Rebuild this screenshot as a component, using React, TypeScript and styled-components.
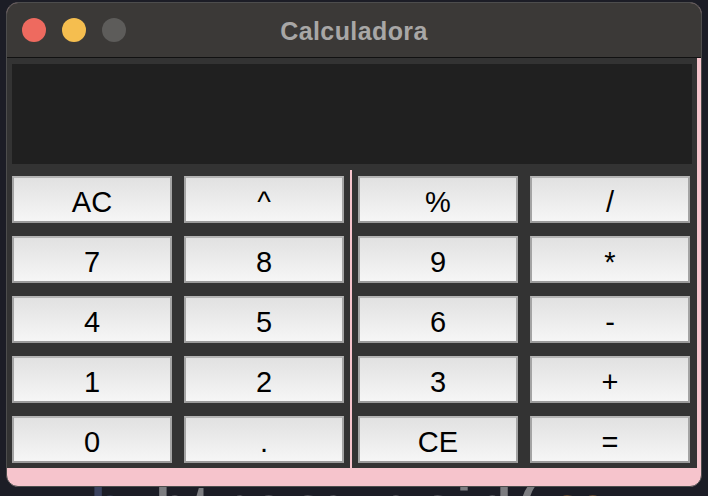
import React from "react";
import styled, { createGlobalStyle } from "styled-components";

const Global = createGlobalStyle`
  html, body { margin: 0; padding: 0; background: #1c1d26; }
  body { width: 708px; height: 496px; overflow: hidden; font-family: "Liberation Sans", Arial, sans-serif; }
`;

const Desktop = styled.div`
  position: relative;
  width: 708px;
  height: 496px;
  background: #1c1d26;
  overflow: hidden;
  padding: 2px 0 0 6px;
  box-sizing: border-box;
`;

const CodeBehind = styled.div`
  position: absolute;
  left: 58px;
  top: 483px;
  font-family: "Liberation Mono", monospace;
  font-weight: bold;
  font-size: 54px;
  line-height: 1;
  white-space: pre;
  color: #7c7c80;
  z-index: 0;
`;

const Tok = styled.span<{ $c: string }>`
  color: ${(p) => p.$c};
`;

const Window = styled.div`
  position: relative;
  z-index: 1;
  width: 696px;
  height: 485px;
  box-sizing: border-box;
  border: 1px solid #4d4d4d;
  border-radius: 12px;
  overflow: hidden;
  background: #f6c4cc;
  display: flex;
  flex-direction: column;
`;

const TitleBar = styled.div`
  position: relative;
  height: 54px;
  flex: 0 0 auto;
  background: #3b3937;
  border-bottom: 1px solid #111;
  display: flex;
  align-items: center;
  justify-content: center;
`;

const Lights = styled.div`
  position: absolute;
  left: 15px;
  top: 15px;
  display: flex;
  gap: 16px;
`;

const Light = styled.span<{ $c: string }>`
  width: 24px;
  height: 24px;
  border-radius: 50%;
  background: ${(p) => p.$c};
`;

const Title = styled.div`
  font-family: "Liberation Sans", Arial, sans-serif;
  font-weight: bold;
  font-size: 25px;
  letter-spacing: 0.4px;
  color: #a8a7a6;
  margin-top: 2px;
`;

const Body = styled.div`
  width: 690px;
  display: flex;
  flex-direction: column;
`;

const DisplayArea = styled.div`
  background: #333333;
  padding: 6px 5px 6px 5px;
`;

const Screen = styled.div`
  height: 100px;
  background: #202020;
`;

const Pads = styled.div`
  display: flex;
  gap: 2px;
`;

const Pad = styled.div<{ $pl: number; $pr: number }>`
  background: #333333;
  padding: 6px ${(p) => p.$pr}px 5px ${(p) => p.$pl}px;
  display: grid;
  grid-template-columns: 160px 160px;
  grid-auto-rows: 47px;
  column-gap: 12px;
  row-gap: 13px;
`;

const Key = styled.button`
  box-sizing: border-box;
  margin: 0;
  padding: 5px 0 0 0;
  border: 2px solid #a4a4a4;
  border-top-color: #b4b4b4;
  border-bottom-color: #9a9a9a;
  border-radius: 0;
  background: linear-gradient(#e1e1e1, #f6f6f6);
  color: #000;
  font-family: "Liberation Sans", Arial, sans-serif;
  font-size: 29px;
  line-height: 1;
  display: flex;
  align-items: center;
  justify-content: center;
  cursor: pointer;
`;

const left = ["AC", "^", "7", "8", "4", "5", "1", "2", "0", "."];
const right = ["%", "/", "9", "*", "6", "-", "3", "+", "CE", "="];

export default function App() {
  return (
    <>
      <Global />
      <Desktop>
        <CodeBehind>
          <Tok $c="#3b425e">vb</Tok>
          {" "}
          <Tok $c="#7c7c80">btnorc.grid(</Tok>
          <Tok $c="#a8743e">row</Tok>
          <Tok $c="#7a5aa0">=</Tok>
        </CodeBehind>
        <Window>
          <TitleBar>
            <Lights>
              <Light $c="#ee6a5f" />
              <Light $c="#f5be4f" />
              <Light $c="#5d5c5a" />
            </Lights>
            <Title>Calculadora</Title>
          </TitleBar>
          <Body>
            <DisplayArea>
              <Screen />
            </DisplayArea>
            <Pads>
              <Pad $pl={5} $pr={6}>
                {left.map((k) => (
                  <Key key={k}>{k}</Key>
                ))}
              </Pad>
              <Pad $pl={6} $pr={7}>
                {right.map((k) => (
                  <Key key={k}>{k}</Key>
                ))}
              </Pad>
            </Pads>
          </Body>
        </Window>
      </Desktop>
    </>
  );
}
